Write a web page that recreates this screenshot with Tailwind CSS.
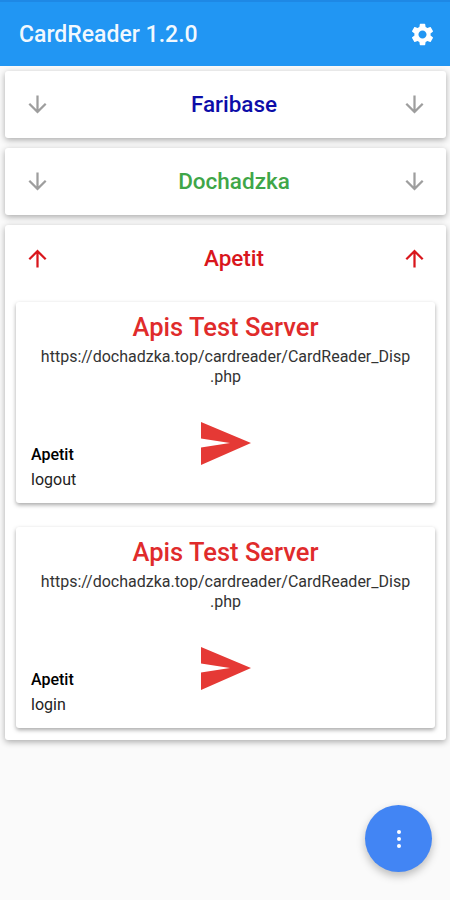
<!DOCTYPE html>
<html lang="en">
<head>
    <meta charset="UTF-8">
    <title>CardReader</title>
    <script src="https://cdn.jsdelivr.net/npm/@tailwindcss/browser@4"></script>
</head>
<body class="bg-[#fafafa] font-['Roboto',sans-serif]">
    <div class="relative w-[450px] h-[900px] overflow-hidden">
        <!-- App bar -->
        <header class="h-[66px] bg-[#2196f3] border-t-[2px] border-[#1e88e5] flex items-center justify-between pl-[19px] pr-[14px]">
            <h1 class="text-[23px] font-medium text-white/95 pt-[3px]">CardReader 1.2.0</h1>
            <svg class="w-[27px] h-[27px] fill-white" viewBox="0 0 24 24"><path d="M19.14 12.94c.04-.3.06-.61.06-.94 0-.32-.02-.64-.07-.94l2.03-1.58a.49.49 0 0 0 .12-.61l-1.92-3.32a.488.488 0 0 0-.59-.22l-2.39.96c-.5-.38-1.03-.7-1.62-.94l-.36-2.54a.484.484 0 0 0-.48-.41h-3.84c-.24 0-.43.17-.47.41l-.36 2.54c-.59.24-1.13.57-1.62.94l-2.39-.96c-.22-.08-.47 0-.59.22L2.74 8.87c-.12.21-.08.47.12.61l2.03 1.58c-.05.3-.09.63-.09.94s.02.64.07.94l-2.03 1.58a.49.49 0 0 0-.12.61l1.92 3.32c.12.22.37.29.59.22l2.39-.96c.5.38 1.03.7 1.62.94l.36 2.54c.05.24.24.41.48.41h3.84c.24 0 .44-.17.47-.41l.36-2.54c.59-.24 1.13-.56 1.62-.94l2.39.96c.22.08.47 0 .59-.22l1.92-3.32c.12-.22.07-.47-.12-.61l-2.01-1.58zM12 15.6c-1.98 0-3.6-1.62-3.6-3.6s1.62-3.6 3.6-3.6 3.6 1.62 3.6 3.6-1.62 3.6-3.6 3.6z"/></svg>
        </header>

        <div class="pl-[5px] pr-[4px] pt-[5px] flex flex-col gap-[10px]">
            <!-- Faribase -->
            <div class="h-[67px] bg-white rounded-[3px] shadow-[0_2px_6px_rgba(0,0,0,0.32)] flex items-center justify-between px-[18.5px]">
                <svg class="w-[27px] h-[27px] fill-[#9e9e9e]" viewBox="0 0 24 24"><path d="M20 12l-1.41-1.41L13 16.17V4h-2v12.17l-5.58-5.59L4 12l8 8 8-8z"/></svg>
                <span class="ml-[17px] pt-[1px] text-[22.5px] font-medium text-[#0d0da8]">Faribase</span>
                <svg class="w-[27px] h-[27px] fill-[#9e9e9e]" viewBox="0 0 24 24"><path d="M20 12l-1.41-1.41L13 16.17V4h-2v12.17l-5.58-5.59L4 12l8 8 8-8z"/></svg>
            </div>

            <!-- Dochadzka -->
            <div class="h-[67px] bg-white rounded-[3px] shadow-[0_2px_6px_rgba(0,0,0,0.32)] flex items-center justify-between px-[18.5px]">
                <svg class="w-[27px] h-[27px] fill-[#9e9e9e]" viewBox="0 0 24 24"><path d="M20 12l-1.41-1.41L13 16.17V4h-2v12.17l-5.58-5.59L4 12l8 8 8-8z"/></svg>
                <span class="ml-[17px] pt-[1px] text-[22.5px] font-medium text-[#3fa648]">Dochadzka</span>
                <svg class="w-[27px] h-[27px] fill-[#9e9e9e]" viewBox="0 0 24 24"><path d="M20 12l-1.41-1.41L13 16.17V4h-2v12.17l-5.58-5.59L4 12l8 8 8-8z"/></svg>
            </div>

            <!-- Apetit -->
            <div class="h-[515px] bg-white rounded-[3px] shadow-[0_2px_6px_rgba(0,0,0,0.32)]">
                <div class="h-[67px] flex items-center justify-between px-[18.5px]">
                    <svg class="w-[27px] h-[27px] fill-[#d9161c]" viewBox="0 0 24 24"><path d="M4 12l1.41 1.41L11 7.83V20h2V7.83l5.58 5.59L20 12l-8-8-8 8z"/></svg>
                    <span class="ml-[17px] text-[22.5px] font-medium text-[#d9161c]">Apetit</span>
                    <svg class="w-[27px] h-[27px] fill-[#d9161c]" viewBox="0 0 24 24"><path d="M4 12l1.41 1.41L11 7.83V20h2V7.83l5.58 5.59L20 12l-8-8-8 8z"/></svg>
                </div>

                <div class="ml-[11px] mr-[11px] mt-[10px] flex flex-col gap-[24px]">
                    <div class="h-[201px] bg-white rounded-[3px] shadow-[0_2px_4px_rgba(0,0,0,0.35)] pt-[9px] px-[15px]">
                        <div class="text-[25.5px] leading-[32px] font-medium text-[#e02b2b] text-center">Apis Test Server</div>
                        <div class="mt-[4px] text-[16px] leading-[19.5px] text-[#333] text-center">https://dochadzka.top/cardreader/CardReader_Disp<br>.php</div>
                        <div class="mt-[36px] flex items-start">
                            <div class="pt-[21px] w-[170px]">
                                <div class="text-[16px] leading-[24px] font-medium text-black">Apetit</div>
                                <div class="text-[16px] leading-[26px] text-[#222]">logout</div>
                            </div>
                            <svg class="w-[50px] h-[43px] fill-[#e53935]" viewBox="0 0 50 43"><path d="M0 0L50 21 0 43V25.5L29 21 0 16.5z"/></svg>
                        </div>
                    </div>

                    <div class="h-[201px] bg-white rounded-[3px] shadow-[0_2px_4px_rgba(0,0,0,0.35)] pt-[9px] px-[15px]">
                        <div class="text-[25.5px] leading-[32px] font-medium text-[#e02b2b] text-center">Apis Test Server</div>
                        <div class="mt-[4px] text-[16px] leading-[19.5px] text-[#333] text-center">https://dochadzka.top/cardreader/CardReader_Disp<br>.php</div>
                        <div class="mt-[36px] flex items-start">
                            <div class="pt-[21px] w-[170px]">
                                <div class="text-[16px] leading-[24px] font-medium text-black">Apetit</div>
                                <div class="text-[16px] leading-[26px] text-[#222]">login</div>
                            </div>
                            <svg class="w-[50px] h-[43px] fill-[#e53935]" viewBox="0 0 50 43"><path d="M0 0L50 21 0 43V25.5L29 21 0 16.5z"/></svg>
                        </div>
                    </div>
                </div>
            </div>
        </div>

        <!-- FAB -->
        <div class="absolute left-[365px] top-[805px] w-[67px] h-[67px] rounded-full bg-[#4285f4] shadow-[0_4px_8px_rgba(0,0,0,0.25)] flex flex-col items-center justify-center gap-[3px]">
            <span class="w-[4px] h-[4px] rounded-full bg-white"></span>
            <span class="w-[4px] h-[4px] rounded-full bg-white"></span>
            <span class="w-[4px] h-[4px] rounded-full bg-white"></span>
        </div>
    </div>
</body>
</html>
